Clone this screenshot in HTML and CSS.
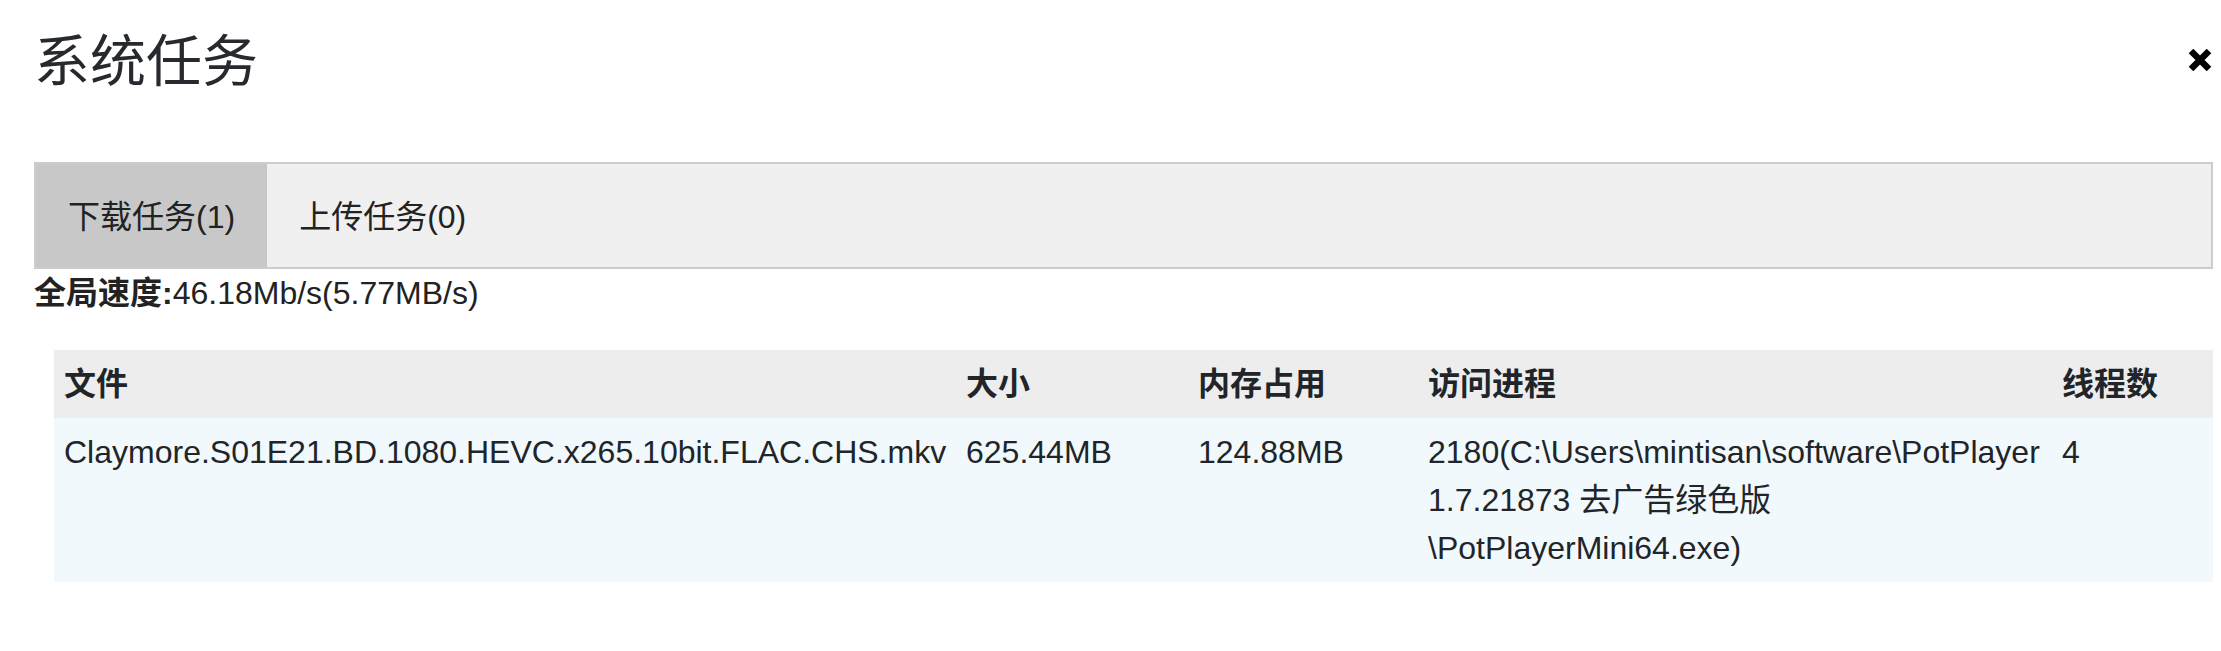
FILE: index.html
```html
<!DOCTYPE html>
<html lang="zh-CN">
<head>
<meta charset="utf-8">
<title>系统任务</title>
<link rel="stylesheet" href="styles.css">
</head>
<body>
<div class="modal">
  <div class="modal-header">
    <h1 class="title">系统任务</h1>
    <button class="close" type="button" aria-label="关闭">
      <svg width="24" height="24" viewBox="0 0 24 24"><path d="M3 3L21 21M21 3L3 21" stroke="#000" stroke-width="6.5"/></svg>
    </button>
  </div>
  <div class="tabs">
    <div class="tab active">下载任务(1)</div>
    <div class="tab">上传任务(0)</div>
  </div>
  <div class="speed"><b>全局速度:</b>46.18Mb/s(5.77MB/s)</div>
  <div class="table-wrap">
    <table class="tasks">
      <colgroup>
        <col class="c-file"><col class="c-size"><col class="c-mem"><col class="c-proc"><col class="c-thr">
      </colgroup>
      <thead>
        <tr><th>文件</th><th>大小</th><th>内存占用</th><th>访问进程</th><th>线程数</th></tr>
      </thead>
      <tbody>
        <tr>
          <td>Claymore.S01E21.BD.1080.HEVC.x265.10bit.FLAC.CHS.mkv</td>
          <td>625.44MB</td>
          <td>124.88MB</td>
          <td>2180(C:\Users\mintisan\software\PotPlayer 1.7.21873 去广告绿色版\PotPlayerMini64.exe)</td>
          <td>4</td>
        </tr>
      </tbody>
    </table>
  </div>
</div>
</body>
</html>
```

FILE: styles.css
```css
html, body {
  margin: 0;
  background: #ffffff;
}
body {
  font-family: "Liberation Sans", "Noto Sans CJK SC", sans-serif;
  color: #212529;
}
.modal {
  padding: 0 8px 0 34px;
}
.modal-header {
  display: flex;
  align-items: center;
  justify-content: space-between;
  height: 118px;
}
.title {
  margin: 0;
  padding-top: 6px;
  font-size: 56px;
  font-weight: 400;
  line-height: 1;
  color: #26292d;
}
.close {
  display: flex;
  background: none;
  border: 0;
  padding: 0;
  margin: 2px 1px 0 0;
  width: 24px;
  height: 24px;
  cursor: pointer;
}
.tabs {
  margin-top: 44px;
  display: flex;
  height: 103px;
  border: 2px solid #cccccc;
  background: #f0f0f0;
}
.tab {
  display: flex;
  align-items: center;
  padding: 0 32px 4px;
  font-size: 32px;
  color: #222222;
}
.tab.active {
  background: #c8c8c8;
}
.speed {
  font-size: 32px;
  line-height: 48px;
  color: #222222;
}
.speed b {
  font-weight: 700;
}
.table-wrap {
  padding-left: 20px;
  margin-top: 33px;
}
.tasks {
  width: 100%;
  border-collapse: collapse;
  table-layout: fixed;
  font-size: 32px;
  line-height: 48px;
}
.tasks th,
.tasks td {
  padding: 10px;
  text-align: left;
  vertical-align: top;
}
.tasks th {
  background: #ededed;
  font-weight: 700;
}
.tasks td {
  background: #f2f9fc;
}
.c-file { width: 902px; }
.c-size { width: 232px; }
.c-mem { width: 230px; }
.c-proc { width: 634px; }
```
